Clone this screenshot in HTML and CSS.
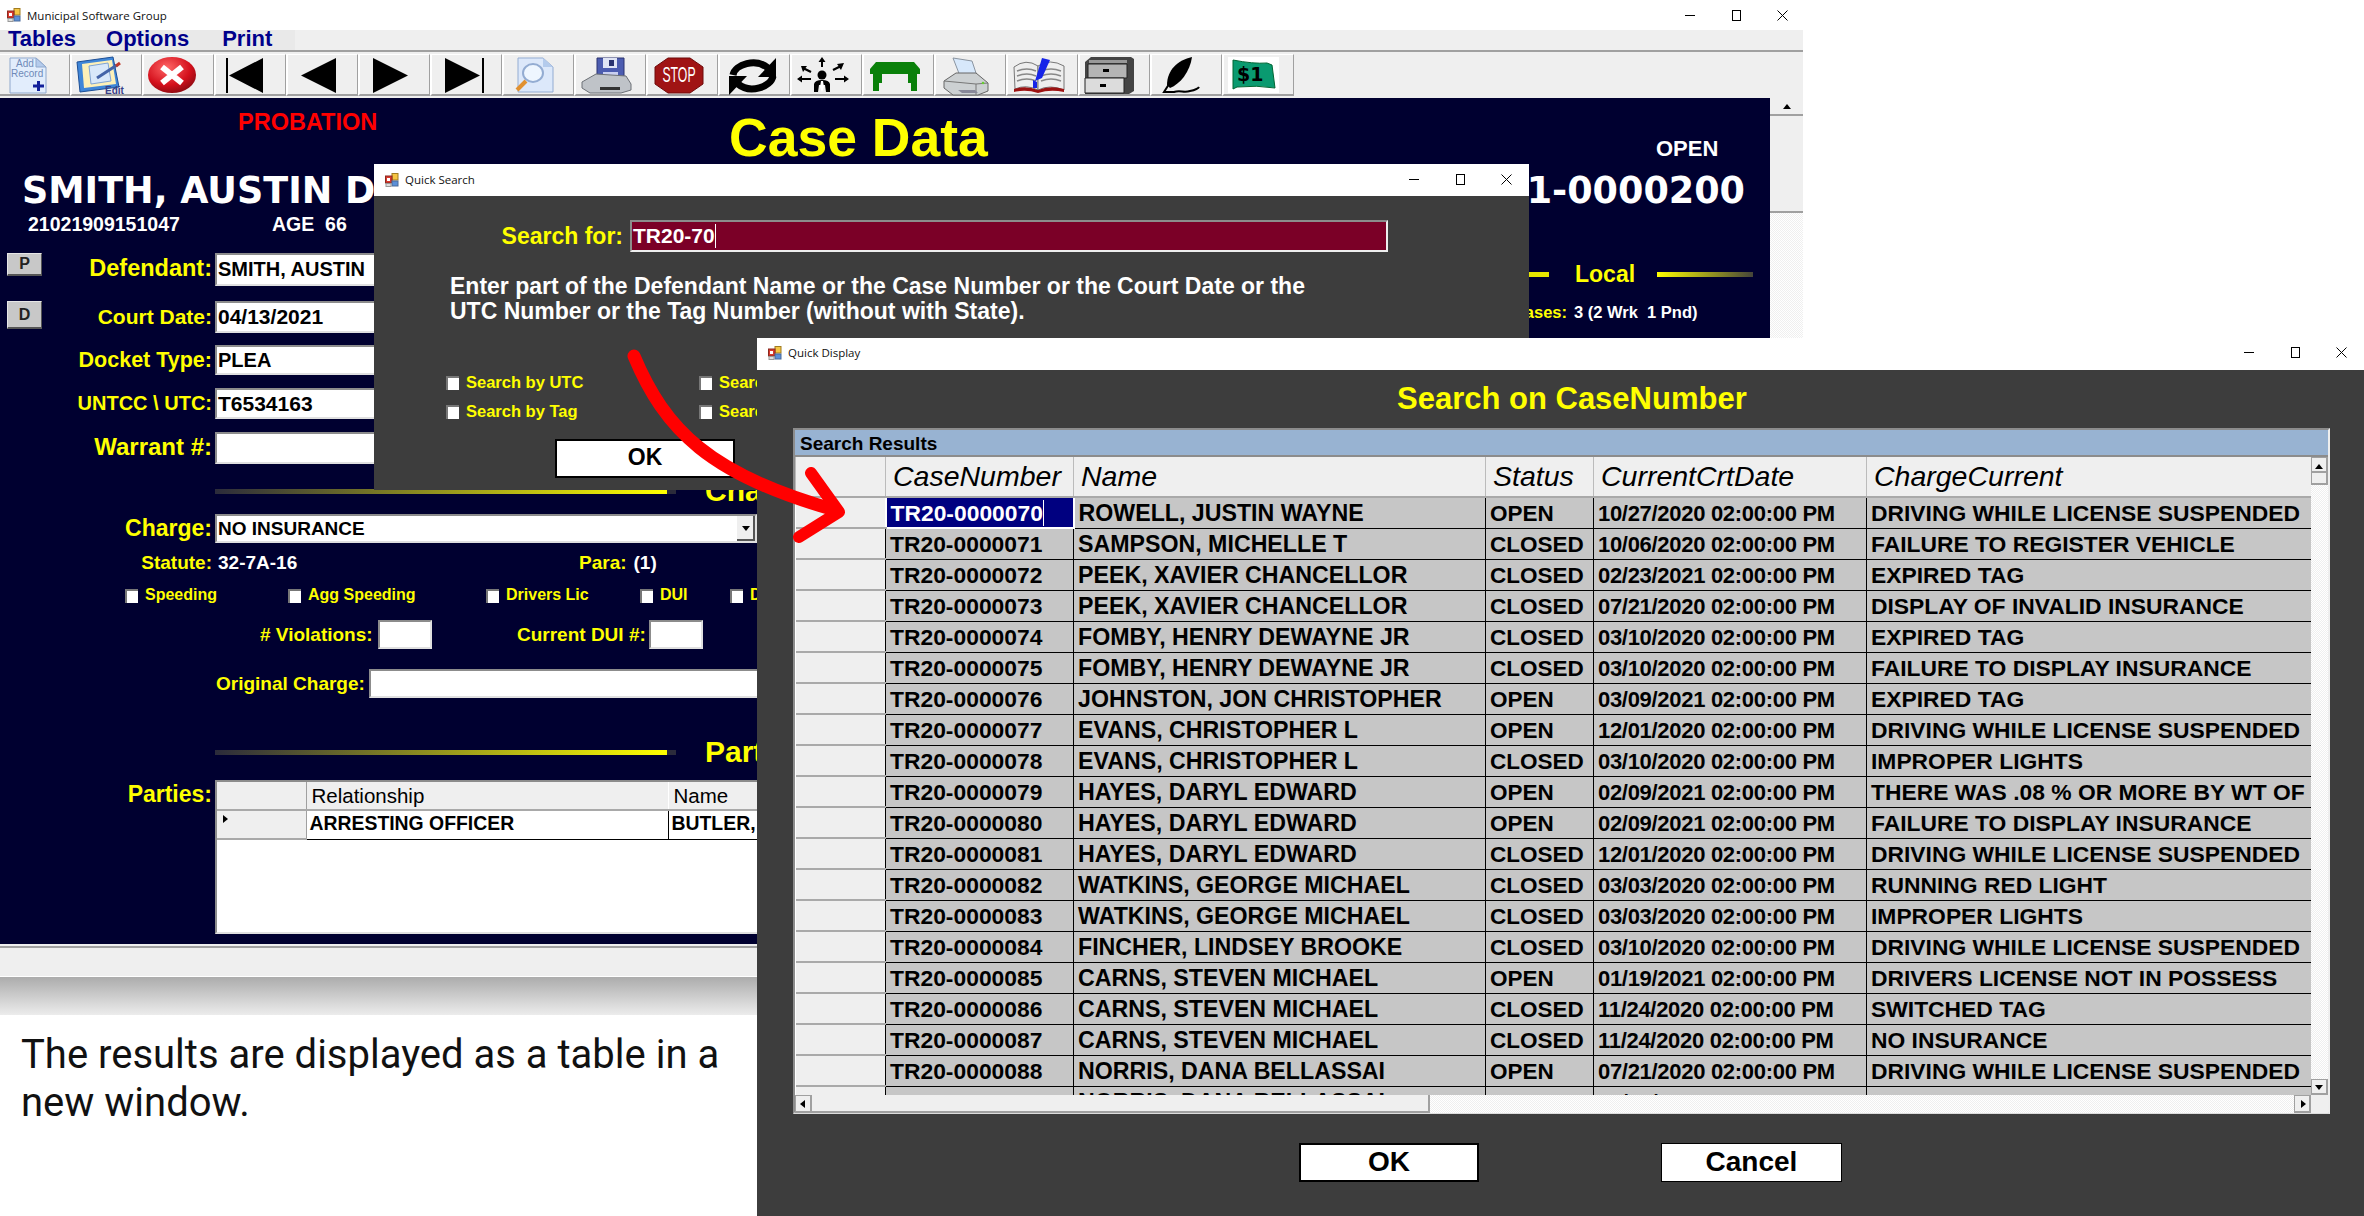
FILE: index.html

```html
<!DOCTYPE html>
<html lang="en">
<head>
  <meta charset="UTF-8">
  <title>Municipal Software Group</title>
  <link rel="stylesheet" href="styles.css">
</head>
<body>
  <svg class="defs" width="0" height="0">
    <defs>
      <symbol id="win-icon" viewBox="0 0 14 14">
        <rect x="7" y=".5" width="6" height="6.500" fill="#f5c542" stroke="#a07c20"/>
        <rect x=".5" y="3" width="6.500" height="7" fill="#d8382c" stroke="#8a2a20"/>
        <rect x="2" y="5" width="3" height="3" fill="#fff"/>
        <rect x="7" y="8" width="6" height="5" fill="#5b8fd8" stroke="#4a6a9a"/>
        <rect x="1" y="10.500" width="5" height="3" fill="#ddd" stroke="#999"/>
      </symbol>
      <symbol id="win-min" viewBox="0 0 11 11"><path d="M0 5.500h10" stroke="#000" fill="none"/></symbol>
      <symbol id="win-max" viewBox="0 0 11 11"><rect x="1.500" y=".5" width="8" height="10" stroke="#000" fill="none"/></symbol>
      <symbol id="win-close" viewBox="0 0 11 11"><path d="M.5 .5l10 10M10.500 .5l-10 10" stroke="#000" fill="none"/></symbol>
      <radialGradient id="red-ball" cx=".4" cy=".3" r=".8">
        <stop offset="0" stop-color="#f66"/><stop offset=".6" stop-color="#d4101c"/><stop offset="1" stop-color="#7a0a10"/>
      </radialGradient>
    </defs>
  </svg>

  <main class="main-window">
    <div class="titlebar">
      <svg class="win-icon"><use href="#win-icon"/></svg>
      <span class="title-text">Municipal Software Group</span>
      <div class="win-controls win-controls-main">
        <span class="win-btn"><svg><use href="#win-min"/></svg></span>
        <span class="win-btn"><svg><use href="#win-max"/></svg></span>
        <span class="win-btn"><svg><use href="#win-close"/></svg></span>
      </div>
    </div>

    <div class="menubar">
      <nav class="menu-items">
        <span class="menu-tables">Tables</span>
        <span class="menu-options">Options</span>
        <span class="menu-print">Print</span>
      </nav>
    </div>

    <div class="toolbar">
      <button class="tool tool-first">
        <svg viewBox="0 0 70 42"><path d="M10 4h26l10 9v26H10z" fill="#e2edfc" stroke="#8fa8cc"/><path d="M36 4v9h10z" fill="#b4cbec" stroke="#8fa8cc"/><text x="16" y="13" class="ico-text" fill="#6f8ab8">Add</text><text x="11" y="23" class="ico-text" fill="#6f8ab8">Record</text><path d="M33 32h11M38.500 27v10" stroke="#12209a" stroke-width="3"/></svg>
      </button>
      <button class="tool">
        <svg viewBox="0 0 70 42"><path d="M5 8l36-5 6 30-39 5z" fill="#3f86d8" stroke="#1d4f96"/><path d="M10 10l30-4 4 24-32 4z" fill="#fdf0b8"/><path d="M17 12l19-3 3 18-20 3z" fill="#d8e8fa" stroke="#7fa4d4"/><path d="M25 24l20-13" stroke="#4464a8" stroke-width="3"/><path d="M44 12l4-3" stroke="#c0392b" stroke-width="3"/><text x="33" y="40" class="ico-small" fill="#3a3f88">Edit</text></svg>
      </button>
      <button class="tool">
        <svg viewBox="0 0 70 42"><ellipse cx="28" cy="21" rx="24" ry="18" fill="url(#red-ball)"/><path d="M18 13l20 16M38 13L18 29" stroke="#fff" stroke-width="6"/></svg>
      </button>
      <button class="tool">
        <svg viewBox="0 0 70 42"><path d="M10 4h2v35h-2zM47 4v35L13 21.500z"/></svg>
      </button>
      <button class="tool">
        <svg viewBox="0 0 70 42"><path d="M48 4v35L13 21.500z"/></svg>
      </button>
      <button class="tool">
        <svg viewBox="0 0 70 42"><path d="M13 4v35l35-17.500z"/></svg>
      </button>
      <button class="tool">
        <svg viewBox="0 0 70 42"><path d="M13 4v35l35-17.500zM50 4h2v35h-2z"/></svg>
      </button>
      <button class="tool">
        <svg viewBox="0 0 70 42"><path d="M14 4h25l10 9v25H14z" fill="#dce8fa" stroke="#93acd2"/><path d="M39 4v9h10z" fill="#b4cbec"/><ellipse cx="29" cy="19" rx="10" ry="9" fill="#eef6ff" stroke="#93acd2" stroke-width="2"/><path d="M22 27l-9 9" stroke="#e09030" stroke-width="4"/></svg>
      </button>
      <button class="tool">
        <svg viewBox="0 0 70 42"><path d="M21 4h27v25H21z" fill="#4c5cb0" stroke="#2a3370"/><path d="M27 4h14v10H27z" fill="#dfe4f5"/><path d="M33 6h5v6h-5z" fill="#2a3370"/><path d="M27 18h15v11H27z" fill="#c9cff0"/><path d="M6 28l14-8 30 2 5 8v6l-10 3H14l-8-5z" fill="#bfc3c8" stroke="#6c7076"/><path d="M24 33h20v3H24z" fill="#333"/></svg>
      </button>
      <button class="tool">
        <svg viewBox="0 0 70 42"><path d="M20 4h22l13 9v17L42 39H20L7 30V13z" fill="#a01414" stroke="#6f0a0a"/><text transform="translate(31 28) scale(.72 1.25)" class="ico-stop" text-anchor="middle">STOP</text></svg>
      </button>
      <button class="tool">
        <svg viewBox="0 0 70 42"><path d="M13 21C15 10 36 4 48 14" fill="none" stroke="#000" stroke-width="7"/><path d="M56 4v19H38z"/><path d="M53 22C51 33 30 40 18 30" fill="none" stroke="#000" stroke-width="7"/><path d="M9 41V22h18z"/></svg>
      </button>
      <button class="tool">
        <svg viewBox="0 0 70 42"><circle cx="30" cy="21" r="4.500"/><path d="M22 38V30q1-4 8-4t8 4v8h-4l-1-7h-6l-1 7z"/><path d="M29 27h2l1 6-2 5-2-5z" fill="#fff"/><path d="M30 3l-3.500 5h2.500v5h2V8h2.500zM9 12l2 6 1.500-2 6 3 1-2-6-3 1.500-2zM52 9l-7 1 1.500 2-6 3 1 2 6-3 1.500 2zM5 25l5-3.500v2.500h9v2h-9v2.500zM57 25l-5-3.500v2.500h-9v2h9v2.500z"/></svg>
      </button>
      <button class="tool">
        <svg viewBox="0 0 70 42"><path d="M12 8h38l6 7v5H6v-5z" fill="#0a800a"/><path d="M9 20h6v17H9zM47 20h6v17h-6zM15 20h3v9h-3zM44 20h3v9h-3z" fill="#0a800a"/></svg>
      </button>
      <button class="tool">
        <svg viewBox="0 0 70 42"><path d="M17 4l19 3 5 15H24z" fill="#d7e8fb" stroke="#8a94a0"/><path d="M8 27l12-8h20l12 10v8l-10 4H17L8 34z" fill="#ccd0d2" stroke="#666"/><path d="M8 27l32 3 12-1M40 30v11" fill="none" stroke="#777"/><path d="M22 36h17l3 3H26z" fill="#889"/><circle cx="47" cy="29" r="1.300" fill="#6c3"/></svg>
      </button>
      <button class="tool">
        <svg viewBox="0 0 70 42"><path d="M6 13q12-9 24-1v24q-12-6-23-1z" fill="#eee" stroke="#777"/><path d="M30 12q12-8 26 0v24q-14-6-26 0z" fill="#eee" stroke="#777"/><path d="M9 17q10-4 19 0M9 22q10-4 19 0M9 27q10-4 19 0M33 17q10-4 20 0M33 22q10-4 20 0M33 27q10-4 20 0" fill="none" stroke="#888" stroke-width="1.500"/><path d="M6 35q12-4 24 1 12-5 26-1v3q-14-3-26 1-12-4-24-1z" fill="#9c1212"/><path d="M34 4l8 2-8 18-7 3z" fill="#1624e8"/><path d="M25 26l4 2v6h-4z" fill="#1624e8"/></svg>
      </button>
      <button class="tool">
        <svg viewBox="0 0 70 42"><path d="M11 3h40l3 2v32l-5 3H5V8z" fill="#444"/><path d="M9 6h38v3H9z" fill="#999"/><path d="M8 10h39v14H8z" fill="#b4b4b4" stroke="#222"/><path d="M23 15h6v3h-6z"/><path d="M5 24h39v15H5z" fill="#dcdcdc" stroke="#222"/><path d="M20 30h6v3h-6z"/></svg>
      </button>
      <button class="tool">
        <svg viewBox="0 0 70 42"><path d="M40 3C26 6 15 16 15 31l3 3C28 30 38 18 40 3z"/><path d="M19 27l-7 11h10c6-2 10 1 16-1 5-1 8-2 9-4" fill="none" stroke="#000" stroke-width="2"/></svg>
      </button>
      <button class="tool">
        <svg viewBox="0 0 70 42"><rect x="4" y="3" width="51" height="36" fill="#fff"/><path d="M9 6q20 4 34 3l5 2 3 23q-18-3-38-1l-4 2z" fill="#0a9a70" stroke="#063"/><text x="13" y="27" class="ico-dollar">$1</text></svg>
      </button>
    </div>

    <section class="case-panel">
      <div class="case-head">
        <span class="probation">PROBATION</span>
        <h1 class="case-title">Case Data</h1>
        <span class="case-status">OPEN</span>
      </div>
      <div class="name-row">
        <span>SMITH, AUSTIN D</span>
        <span>TR21-0000200</span>
      </div>
      <div class="case-body">
        <div class="case-form">
          <div class="id-row">
            <span class="id-number">21021909151047</span>
            <span class="age">AGE&nbsp; 66</span>
          </div>

          <div class="form-row row-defendant">
            <div class="slot"><button class="side-btn side-p">P</button><label class="lbl lbl-def">Defendant:</label></div>
            <div class="field field-wide fs20">SMITH, AUSTIN</div>
          </div>
          <div class="form-row row-court">
            <div class="slot"><button class="side-btn side-d">D</button><label class="lbl lbl-court">Court Date:</label></div>
            <div class="field field-wide fs21">04/13/2021</div>
          </div>
          <div class="form-row row-docket">
            <div class="slot"><label class="lbl lbl-docket">Docket Type:</label></div>
            <div class="field field-wide fs20">PLEA</div>
          </div>
          <div class="form-row row-utc">
            <div class="slot"><label class="lbl">UNTCC \ UTC:</label></div>
            <div class="field field-wide fs21">T6534163</div>
          </div>
          <div class="form-row row-warrant">
            <div class="slot"><label class="lbl lbl-warrant">Warrant #:</label></div>
            <div class="field field-wide"></div>
          </div>

          <div class="section-row row-sec1">
            <span class="grad-line"></span><h2>Charges</h2>
          </div>

          <div class="form-row row-charge">
            <div class="slot"><label class="lbl lbl-big">Charge:</label></div>
            <div class="field field-combo fs19">NO INSURANCE<span class="combo-btn"></span></div>
          </div>
          <div class="form-row row-statute">
            <div class="slot"><label class="lbl lbl-19">Statute:</label></div>
            <span class="statute-val">32-7A-16</span>
            <label class="lbl lbl-19">Para:</label>
            <span class="para-val">(1)</span>
          </div>
          <div class="checks">
            <span class="chk"><i></i>Speeding</span>
            <span class="chk"><i></i>Agg Speeding</span>
            <span class="chk"><i></i>Drivers Lic</span>
            <span class="chk"><i></i>DUI</span>
            <span class="chk"><i></i>DWI</span>
          </div>
          <div class="form-row row-viol">
            <label class="lbl lbl-19 lbl-viol">&#35; Violations:</label>
            <div class="field field-small"></div>
            <label class="lbl lbl-19 lbl-dui">Current DUI #:</label>
            <div class="field field-small"></div>
          </div>
          <div class="form-row row-orig">
            <label class="lbl lbl-19 lbl-orig">Original Charge:</label>
            <div class="field field-orig"></div>
          </div>

          <div class="section-row row-sec2">
            <span class="grad-line"></span><h2>Parties</h2>
          </div>

          <div class="form-row row-parties">
            <div class="slot"><label class="lbl lbl-big">Parties:</label></div>
            <div class="parties">
              <table>
                <tr class="parties-head"><th class="rowhead"></th><th class="col-rel">Relationship</th><th>Name</th></tr>
                <tr class="parties-row"><td class="rowhead"><span class="row-arrow"></span></td><td>ARRESTING OFFICER</td><td>BUTLER, JOHN</td></tr>
              </table>
            </div>
          </div>
        </div>

        <aside class="case-side">
          <div class="local-row">
            <span class="local-line-a"></span><span class="local-text">Local</span><span class="local-line-b"></span>
          </div>
          <div class="cases-row">
            <span class="cases-label">Cases:</span><span class="cases-val">3 (2 Wrk&nbsp; 1 Pnd)</span>
          </div>
        </aside>
      </div>
    </section>

    <div class="scroll-main">
      <span class="sb-btn sb-up"></span>
      <span class="sb-thumb"></span>
      <span class="sb-track"></span>
    </div>

    <div class="statusbar"></div>
  </main>
  <div class="fade"></div>
  <p class="caption">The results are displayed as a table in a new window.</p>

  <div class="quick-search">
    <div class="titlebar titlebar-sub">
      <svg class="win-icon"><use href="#win-icon"/></svg>
      <span class="title-text">Quick Search</span>
      <div class="win-controls">
        <span class="win-btn"><svg><use href="#win-min"/></svg></span>
        <span class="win-btn"><svg><use href="#win-max"/></svg></span>
        <span class="win-btn"><svg><use href="#win-close"/></svg></span>
      </div>
    </div>
    <div class="qs-body">
      <div class="qs-search">
        <label class="qs-label">Search for:</label>
        <div class="qs-input">TR20-70<span class="caret"></span></div>
      </div>
      <p class="qs-help">Enter part of the Defendant Name or the Case Number or the Court Date or the<br>UTC Number or the Tag Number (without with State).</p>
      <div class="qs-checks">
        <span class="chk"><i></i>Search by UTC</span>
        <span class="chk"><i></i>Search by Name</span>
        <span class="chk"><i></i>Search by Tag</span>
        <span class="chk"><i></i>Search by Date</span>
      </div>
      <button class="big-btn qs-ok">OK</button>
    </div>
  </div>

  <div class="quick-display">
    <div class="titlebar titlebar-sub titlebar-qd">
      <svg class="win-icon"><use href="#win-icon"/></svg>
      <span class="title-text">Quick Display</span>
      <div class="win-controls">
        <span class="win-btn"><svg><use href="#win-min"/></svg></span>
        <span class="win-btn"><svg><use href="#win-max"/></svg></span>
        <span class="win-btn"><svg><use href="#win-close"/></svg></span>
      </div>
    </div>
    <div class="qd-body">
      <h2 class="qd-title">Search on CaseNumber</h2>
      <div class="results">
        <div class="results-caption">Search Results</div>
        <div class="results-main">
          <div class="results-clip">
            <table class="results-table">
              <colgroup><col class="c0"><col class="c1"><col class="c2"><col class="c3"><col class="c4"><col class="c5"></colgroup>
              <thead>
                <tr><th></th><th>CaseNumber</th><th>Name</th><th>Status</th><th>CurrentCrtDate</th><th>ChargeCurrent</th></tr>
              </thead>
              <tbody>
                <tr><th></th><td class="selected"><span>TR20-0000070</span></td><td>ROWELL, JUSTIN WAYNE</td><td>OPEN</td><td>10/27/2020 02:00:00 PM</td><td>DRIVING WHILE LICENSE SUSPENDED</td></tr>
                <tr><th></th><td>TR20-0000071</td><td>SAMPSON, MICHELLE T</td><td>CLOSED</td><td>10/06/2020 02:00:00 PM</td><td>FAILURE TO REGISTER VEHICLE</td></tr>
                <tr><th></th><td>TR20-0000072</td><td>PEEK, XAVIER CHANCELLOR</td><td>CLOSED</td><td>02/23/2021 02:00:00 PM</td><td>EXPIRED TAG</td></tr>
                <tr><th></th><td>TR20-0000073</td><td>PEEK, XAVIER CHANCELLOR</td><td>CLOSED</td><td>07/21/2020 02:00:00 PM</td><td>DISPLAY OF INVALID INSURANCE</td></tr>
                <tr><th></th><td>TR20-0000074</td><td>FOMBY, HENRY DEWAYNE JR</td><td>CLOSED</td><td>03/10/2020 02:00:00 PM</td><td>EXPIRED TAG</td></tr>
                <tr><th></th><td>TR20-0000075</td><td>FOMBY, HENRY DEWAYNE JR</td><td>CLOSED</td><td>03/10/2020 02:00:00 PM</td><td>FAILURE TO DISPLAY INSURANCE</td></tr>
                <tr><th></th><td>TR20-0000076</td><td>JOHNSTON, JON CHRISTOPHER</td><td>OPEN</td><td>03/09/2021 02:00:00 PM</td><td>EXPIRED TAG</td></tr>
                <tr><th></th><td>TR20-0000077</td><td>EVANS, CHRISTOPHER L</td><td>OPEN</td><td>12/01/2020 02:00:00 PM</td><td>DRIVING WHILE LICENSE SUSPENDED</td></tr>
                <tr><th></th><td>TR20-0000078</td><td>EVANS, CHRISTOPHER L</td><td>CLOSED</td><td>03/10/2020 02:00:00 PM</td><td>IMPROPER LIGHTS</td></tr>
                <tr><th></th><td>TR20-0000079</td><td>HAYES, DARYL EDWARD</td><td>OPEN</td><td>02/09/2021 02:00:00 PM</td><td>THERE WAS .08 % OR MORE BY WT OF</td></tr>
                <tr><th></th><td>TR20-0000080</td><td>HAYES, DARYL EDWARD</td><td>OPEN</td><td>02/09/2021 02:00:00 PM</td><td>FAILURE TO DISPLAY INSURANCE</td></tr>
                <tr><th></th><td>TR20-0000081</td><td>HAYES, DARYL EDWARD</td><td>CLOSED</td><td>12/01/2020 02:00:00 PM</td><td>DRIVING WHILE LICENSE SUSPENDED</td></tr>
                <tr><th></th><td>TR20-0000082</td><td>WATKINS, GEORGE MICHAEL</td><td>CLOSED</td><td>03/03/2020 02:00:00 PM</td><td>RUNNING RED LIGHT</td></tr>
                <tr><th></th><td>TR20-0000083</td><td>WATKINS, GEORGE MICHAEL</td><td>CLOSED</td><td>03/03/2020 02:00:00 PM</td><td>IMPROPER LIGHTS</td></tr>
                <tr><th></th><td>TR20-0000084</td><td>FINCHER, LINDSEY BROOKE</td><td>CLOSED</td><td>03/10/2020 02:00:00 PM</td><td>DRIVING WHILE LICENSE SUSPENDED</td></tr>
                <tr><th></th><td>TR20-0000085</td><td>CARNS, STEVEN MICHAEL</td><td>OPEN</td><td>01/19/2021 02:00:00 PM</td><td>DRIVERS LICENSE NOT IN POSSESS</td></tr>
                <tr><th></th><td>TR20-0000086</td><td>CARNS, STEVEN MICHAEL</td><td>CLOSED</td><td>11/24/2020 02:00:00 PM</td><td>SWITCHED TAG</td></tr>
                <tr><th></th><td>TR20-0000087</td><td>CARNS, STEVEN MICHAEL</td><td>CLOSED</td><td>11/24/2020 02:00:00 PM</td><td>NO INSURANCE</td></tr>
                <tr><th></th><td>TR20-0000088</td><td>NORRIS, DANA BELLASSAI</td><td>OPEN</td><td>07/21/2020 02:00:00 PM</td><td>DRIVING WHILE LICENSE SUSPENDED</td></tr>
                <tr><th></th><td>TR20-0000089</td><td>NORRIS, DANA BELLASSAI</td><td>OPEN</td><td>07/21/2020 02:00:00 PM</td><td>NO INSURANCE</td></tr>
              </tbody>
            </table>
          </div>
          <div class="vscroll">
            <span class="sb-btn sb-up sb-small"></span>
            <span class="vthumb"></span>
            <span class="sb-track"></span>
            <span class="sb-btn sb-down sb-small"></span>
          </div>
        </div>
        <div class="hscroll">
          <span class="hs-btn hs-left"></span>
          <span class="hthumb"></span>
          <span class="sb-track"></span>
          <span class="hs-btn hs-right"></span>
          <span class="hs-corner"></span>
        </div>
      </div>
      <div class="qd-buttons">
        <button class="big-btn qd-ok">OK</button>
        <button class="big-btn qd-cancel">Cancel</button>
      </div>
    </div>
  </div>

  <svg class="red-arrow" viewBox="620 340 240 210" width="240" height="210">
    <path d="M634 356C665 430 710 475 835 510" fill="none" stroke="#f00" stroke-width="13" stroke-linecap="round"/>
    <path d="M811 473L839 512 799 537" fill="none" stroke="#f00" stroke-width="12" stroke-linecap="round" stroke-linejoin="round"/>
  </svg>
</body>
</html>
```

FILE: styles.css

```css
* {
  box-sizing: border-box;
}
body {
  margin: 0;
  width: 2364px;
  height: 1216px;
  position: relative;
  overflow: hidden;
  background: #fff;
  color: #000;
  font-family: "Liberation Sans", Arial, sans-serif;
}
.defs {
  position: absolute;
}
h1, h2, p {
  margin: 0;
}
table {
  border-collapse: collapse;
  table-layout: fixed;
}

/* title bars */
.titlebar {
  height: 30px;
  display: flex;
  align-items: center;
  padding-left: 7px;
  background: #fff;
}
.titlebar-sub {
  height: 32px;
  padding-left: 11px;
  padding-bottom: 1px;
}
.titlebar-qd {
  padding-bottom: 3px;
}
.win-icon {
  width: 14px;
  height: 14px;
  flex: none;
}
.title-text {
  margin-left: 6px;
  font: 11.500px "Open Sans", sans-serif;
  color: #111;
}
.win-controls {
  margin-left: auto;
  display: flex;
}
.win-controls-main {
  margin-right: -2px;
}
.win-btn {
  width: 46px;
  display: flex;
  justify-content: center;
}
.win-btn svg {
  width: 11px;
  height: 11px;
}

/* main window */
.main-window {
  width: 1803px;
  display: grid;
  grid-template-columns: 1770px 33px;
  grid-template-rows: 30px 22px 46px 846px 33px;
}
.main-window > .titlebar,
.menubar,
.toolbar,
.statusbar {
  grid-column: 1 / 3;
}
.menubar {
  background: #efefef;
  border-bottom: 2px solid #a0a0a0;
}
.menu-items {
  width: 295px;
  height: 20px;
  background: #e9e9e9;
  display: flex;
  align-items: center;
  padding: 0 0 2px 8px;
  font-size: 22px;
  font-weight: bold;
  color: #00008b;
}
.menu-options {
  margin-left: 30px;
}
.menu-print {
  margin-left: 33px;
}
.toolbar {
  background: #efefef;
  display: flex;
  padding-top: 2px;
  height: 46px;
}
.tool {
  width: 72px;
  height: 42px;
  padding: 0;
  background: #efefef;
  border: 0;
  border-left: 2px solid #fff;
  border-top: 1px solid #fff;
  border-right: 1px solid #a0a0a0;
  border-bottom: 2px solid #a0a0a0;
  display: block;
}
.tool-first {
  width: 70px;
  border-left: 0;
}
.tool svg {
  display: block;
  width: 70px;
  height: 42px;
  margin-top: -1px;
}
.ico-text {
  font-size: 10px;
}
.ico-small {
  font-size: 10px;
  font-weight: bold;
}
.ico-stop {
  font-size: 17px;
  fill: #fff;
}
.ico-dollar {
  font-size: 19px;
  font-weight: bold;
  font-family: "DejaVu Sans", sans-serif;
}

.case-panel {
  background: #000030;
  color: #fff;
  overflow: hidden;
  font-weight: bold;
}
.case-head {
  height: 78px;
  display: flex;
  align-items: flex-start;
}
.probation {
  margin: 12px 0 0 238px;
  width: 491px;
  line-height: 24px;
  font-size: 23.500px;
  color: #f00;
}
.case-title {
  margin-top: 10px;
  width: 927px;
  line-height: 60px;
  font-size: 53.500px;
  color: #ff0;
}
.case-status {
  margin-top: 39px;
  line-height: 24px;
  font-size: 22px;
}
.name-row {
  height: 28px;
  display: flex;
  justify-content: space-between;
  align-items: center;
  padding: 0 25px 0 22px;
  font: bold 36.500px "DejaVu Sans", sans-serif;
}
.case-body {
  display: flex;
}
.case-form {
  width: 1400px;
  flex: none;
}
.id-row {
  height: 21px;
  margin-top: 10px;
  display: flex;
  align-items: center;
  font-size: 19.500px;
}
.id-number {
  margin-left: 28px;
  width: 244px;
}

.form-row {
  display: flex;
  align-items: center;
}
.row-defendant { height: 33px; margin-top: 18px; }
.row-court { height: 32px; margin-top: 15px; }
.row-docket { height: 30px; margin-top: 12px; }
.row-utc { height: 31px; margin-top: 13px; }
.row-warrant { height: 32px; margin-top: 13px; }
.row-charge { height: 29px; margin-top: 8px; }
.row-statute { height: 22px; margin-top: 9px; }
.row-viol { height: 29px; margin-top: 14px; }
.row-orig { height: 29px; margin-top: 20px; }
.row-parties { height: 154px; margin-top: 13px; align-items: flex-start; }

.slot {
  width: 215px;
  height: 100%;
  flex: none;
  display: flex;
  align-items: center;
  padding: 0 3px 0 7px;
}
.row-parties .slot {
  height: 28px;
}
.lbl {
  color: #ff0;
  font-size: 20px;
  margin-left: auto;
  white-space: nowrap;
}
.lbl-big { font-size: 23px; }
.lbl-def { font-size: 23.500px; padding-bottom: 2px; }
.lbl-warrant { font-size: 24px; padding-bottom: 2px; }
.lbl-court { font-size: 21px; }
.lbl-docket { font-size: 21.500px; }
.lbl-19 { font-size: 19px; }
.side-btn {
  width: 35px;
  padding: 0;
  background: #c8c8c8;
  font: bold 16px "Liberation Sans", sans-serif;
  color: #222;
  border: 0;
  border-top: 1px solid #e6e6e6;
  border-left: 1px solid #e6e6e6;
  border-right: 1px solid #555;
  border-bottom: 2px solid #555;
  align-self: flex-start;
}
.side-p { height: 23px; }
.side-d { height: 28px; }

.field {
  height: 100%;
  flex: none;
  background: #fff;
  color: #000;
  border-top: 2px solid #8c8c8c;
  border-left: 2px solid #8c8c8c;
  border-bottom: 2px solid #e0e0e0;
  border-right: 2px solid #e0e0e0;
  padding-left: 1px;
  display: flex;
  align-items: center;
  white-space: nowrap;
}
.field-wide {
  width: 560px;
}
.field-combo {
  width: 542px;
  position: relative;
}
.field-small {
  width: 54px;
}
.field-orig {
  width: 500px;
}
.fs19 { font-size: 19px; }
.fs20 { font-size: 20px; }
.fs21 { font-size: 21px; }
.combo-btn {
  position: absolute;
  right: 0;
  top: 0;
  bottom: 0;
  width: 18px;
  background: #efefef;
  border-right: 2px solid #555;
  border-bottom: 2px solid #555;
}
.combo-btn::after {
  content: "";
  position: absolute;
  left: 5px;
  top: 10px;
  border: 4px solid transparent;
  border-top: 5px solid #000;
}

.section-row {
  height: 30px;
  padding-left: 215px;
  display: flex;
  align-items: center;
}
.row-sec1 { margin-top: 12px; }
.row-sec2 { margin-top: 39px; }
.section-row h2 {
  margin-left: 29px;
  font-size: 30px;
  color: #ff0;
}
.grad-line {
  width: 461px;
  height: 5px;
  background: linear-gradient(90deg, #2b2b3b, #ff0 98%, #2b2b3b 98%);
}
.statute-val {
  margin-left: 3px;
  width: 361px;
  font-size: 19px;
}
.para-val {
  margin-left: 7px;
  font-size: 19px;
}
.row-statute .statute-val + .lbl {
  margin-left: 0;
}

.checks {
  height: 22px;
  margin: 10px 0 0 125px;
  display: grid;
  grid-template-columns: 163px 198px 154px 90px auto;
  align-items: center;
}
.chk {
  display: flex;
  align-items: center;
  color: #ff0;
  font-size: 16px;
  font-weight: bold;
  white-space: nowrap;
}
.chk i {
  width: 13px;
  height: 14px;
  margin: 1px 7px 0 0;
  background: #fff;
  border-top: 2px solid #777;
  border-left: 2px solid #777;
  flex: none;
}
.lbl-viol {
  margin-left: 260px;
  width: 118px;
}
.lbl-dui {
  margin-left: 85px;
  width: 132px;
}
.lbl-orig {
  margin-left: 216px;
  width: 153px;
}

.parties {
  width: 560px;
  height: 154px;
  flex: none;
  background: #fff;
  color: #000;
  border-top: 2px solid #8c8c8c;
  border-left: 2px solid #8c8c8c;
  border-bottom: 2px solid #e0e0e0;
}
.parties table {
  width: 560px;
}
.parties th.rowhead,
.parties td.rowhead {
  width: 89px;
  background: #efefef;
  border-right: 1px solid #a0a0a0;
  border-bottom: 2px solid #a9a9a9;
}
.parties-head {
  height: 28px;
}
.parties-head th {
  background: #efefef;
  border-bottom: 2px solid #a9a9a9;
  font-size: 20.500px;
  font-weight: normal;
  text-align: left;
  padding-left: 5px;
}
.col-rel {
  width: 362px;
  border-right: 1px solid #fff;
}
.parties-row {
  height: 29px;
}
.parties-row td {
  font-size: 19.400px;
  font-weight: bold;
  padding: 0 0 2px 3px;
  border-bottom: 1px solid #000;
  border-right: 1px solid #000;
  white-space: nowrap;
  overflow: hidden;
}
.parties-row td.rowhead {
  padding: 0 0 12px 6px;
}
.row-arrow {
  display: block;
  width: 0;
  border: 4px solid transparent;
  border-left: 5px solid #000;
}

.case-side {
  flex: none;
  width: 370px;
}
.local-row {
  margin: 57px 0 0 80px;
  height: 26px;
  display: flex;
  align-items: center;
}
.local-line-a {
  width: 69px;
  height: 5px;
  background: #e6e600;
}
.local-line-b {
  width: 96px;
  height: 5px;
  background: linear-gradient(90deg, #ff0, #44443a);
}
.local-text {
  margin: 0 22px 0 26px;
  font-size: 23px;
  color: #ff0;
}
.cases-row {
  margin-top: 14px;
  display: flex;
  align-items: center;
  font-size: 16.500px;
  height: 22px;
}
.cases-label {
  width: 167px;
  text-align: right;
  color: #ff0;
}
.cases-val {
  margin-left: 7px;
}

/* main window scrollbar */
.scroll-main {
  background: #efefef;
  display: flex;
  flex-direction: column;
  height: 248px;
}
.sb-btn {
  flex: none;
  height: 18px;
  position: relative;
  background: #efefef;
  border-bottom: 2px solid #a0a0a0;
}
.sb-up::after,
.sb-down::after {
  content: "";
  position: absolute;
  left: 50%;
  margin-left: -4px;
  border: 4px solid transparent;
}
.sb-up::after {
  top: 2px;
  border-bottom: 5px solid #000;
}
.sb-down::after {
  top: 5px;
  border-top: 5px solid #000;
}
.sb-thumb {
  flex: none;
  height: 97px;
  background: #efefef;
  border-bottom: 2px solid #a0a0a0;
}
.sb-track {
  flex: 1;
  background: repeating-conic-gradient(#efefef 0 25%, #fff 0 50%) 0 0 / 2px 2px;
}
.statusbar {
  background: linear-gradient(#efefef 2px, #a0a0a0 2px, #a0a0a0 4px, #efefef 4px);
  border-bottom: 1px solid #fff;
}
.fade {
  width: 1803px;
  height: 38px;
  background: linear-gradient(#acacac, #ececec);
}
.caption {
  width: 730px;
  margin: 16px 0 0 21px;
  font: 40px/48px Roboto, sans-serif;
  color: #111;
}

/* quick search */
.quick-search {
  position: absolute;
  left: 374px;
  top: 164px;
  width: 1155px;
  height: 326px;
  background: #3d3d3d;
}
.qs-body {
  padding-top: 24px;
  color: #fff;
  font-weight: bold;
}
.qs-search {
  display: flex;
  align-items: center;
  height: 32px;
}
.qs-label {
  width: 249px;
  text-align: right;
  font-size: 23px;
  color: #ff0;
}
.qs-input {
  margin-left: 7px;
  width: 758px;
  height: 32px;
  background: #7b0027;
  border-top: 2px solid #8c8c8c;
  border-left: 2px solid #8c8c8c;
  border-bottom: 2px solid #eee;
  border-right: 2px solid #eee;
  padding-left: 1px;
  font-size: 21px;
  display: flex;
  align-items: center;
}
.caret {
  width: 1px;
  height: 24px;
  background: #fff;
}
.qs-help {
  margin: 22px 0 0 76px;
  font-size: 23px;
  line-height: 25px;
}
.qs-checks {
  margin: 44px 0 0 72px;
  display: grid;
  grid-template-columns: 253px auto;
  grid-auto-rows: 29px;
  align-items: center;
}
.qs-checks .chk {
  font-size: 16.500px;
}
.big-btn {
  display: block;
  padding: 0 0 2px;
  background: #fff;
  color: #000;
  font: bold 28px "Liberation Sans", sans-serif;
  border: 2px solid #000;
  width: 180px;
  height: 39px;
}
.qs-ok {
  margin: 13px 0 0 181px;
  font-size: 23px;
}

/* quick display */
.quick-display {
  position: absolute;
  left: 757px;
  top: 338px;
  width: 1607px;
  height: 878px;
  background: #3d3d3d;
}
.qd-body {
  height: 847px;
  padding: 0 0 0 36px;
}
.titlebar-sub + .qd-body {
  margin-top: -1px;
}
.qd-title {
  height: 59px;
  padding: 15px 0 0 604px;
  line-height: 30px;
  font-size: 31px;
  color: #ff0;
}
.results {
  width: 1537px;
  height: 686px;
  background: #fff;
  border-top: 2px solid #8c8c8c;
  border-left: 2px solid #8c8c8c;
  border-bottom: 2px solid #ddd;
  border-right: 2px solid #eee;
}
.results-caption {
  height: 27px;
  padding-left: 5px;
  line-height: 27px;
  background: #98b3d2;
  border-bottom: 2px solid #8c8c8c;
  font-size: 19px;
  font-weight: bold;
}
.results-main {
  display: flex;
  height: 638px;
}
.results-clip {
  width: 1516px;
  height: 638px;
  overflow: hidden;
}
.results-table {
  width: 1516px;
}
.c0 { width: 90px; }
.c1 { width: 188px; }
.c2 { width: 412px; }
.c3 { width: 108px; }
.c4 { width: 273px; }
.c5 { width: 445px; }
.results-table thead tr {
  height: 40px;
}
.results-table thead th {
  background: #efefef;
  border-bottom: 2px solid #a9a9a9;
  border-left: 1px solid #bbb;
  padding-left: 7px;
  font-size: 28.500px;
  font-weight: normal;
  font-style: italic;
  text-align: left;
  overflow: hidden;
  white-space: nowrap;
}
.results-table tbody tr {
  height: 31px;
}
.results-table tbody th {
  background: #efefef;
  border-bottom: 2px solid #a9a9a9;
}
.results-table td {
  background: #c6c6c6;
  border-left: 1px solid #000;
  border-bottom: 1px solid #000;
  padding: 2px 0 0 4px;
  font-size: 22.850px;
  font-weight: bold;
  white-space: nowrap;
  overflow: hidden;
}
.results-table td:nth-child(3) {
  font-size: 23.200px;
}
.results-table td:nth-child(4) {
  font-size: 22.500px;
}
.results-table td:nth-child(5) {
  font-size: 22px;
  letter-spacing: -.3px;
}
.results-table td.selected {
  background: #000080;
  color: #fff;
  border: 2px solid #fff;
}
.selected span {
  border-right: 1px solid #fff;
}
.vscroll {
  width: 17px;
  flex: none;
  display: flex;
  flex-direction: column;
}
.sb-small {
  height: 16px;
  border: 1px solid #a0a0a0;
  border-width: 1px 2px 2px 1px;
}
.vthumb {
  height: 12px;
  flex: none;
  background: #efefef;
  border: 1px solid #a0a0a0;
  border-width: 0 2px 2px 1px;
}
.hscroll {
  height: 18px;
  display: flex;
}
.hs-btn {
  width: 17px;
  flex: none;
  position: relative;
  background: #efefef;
  border: 1px solid #a0a0a0;
  border-width: 1px 2px 2px 1px;
}
.hs-left::after,
.hs-right::after {
  content: "";
  position: absolute;
  top: 4px;
  border: 4px solid transparent;
}
.hs-left::after {
  left: 0;
  border-right: 5px solid #000;
}
.hs-right::after {
  left: 6px;
  border-left: 5px solid #000;
}
.hthumb {
  width: 618px;
  flex: none;
  background: #efefef;
  border-right: 2px solid #a0a0a0;
  border-bottom: 2px solid #a0a0a0;
}
.hs-corner {
  width: 17px;
  flex: none;
  background: #efefef;
}
.qd-buttons {
  margin: 29px 0 0 506px;
  display: flex;
  gap: 182px;
}
.qd-cancel {
  border-width: 1px;
  width: 181px;
}

.red-arrow {
  position: absolute;
  left: 620px;
  top: 340px;
}
```
